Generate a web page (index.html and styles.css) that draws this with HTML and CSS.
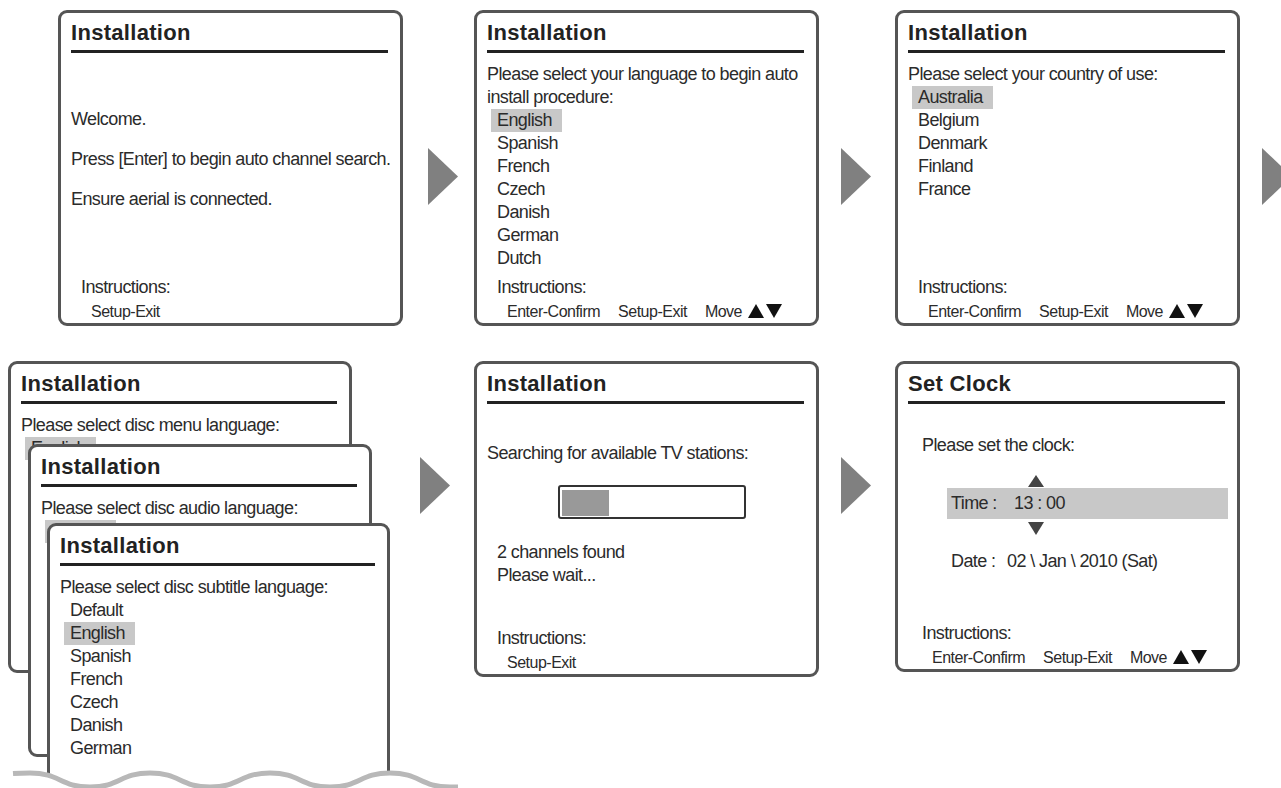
FILE: index.html
```html
<!DOCTYPE html>
<html lang="en">
<head>
    <meta charset="UTF-8">
    <meta name="viewport" content="width=device-width, initial-scale=1.0">
    <title>First Time Installation</title>
    <link rel="stylesheet" href="styles.css">
</head>

<body>
    <div class="row row-top">
        <div class="panel">
            <div class="panel-title">Installation</div>
            <div class="panel-body welcome">
                <p>Welcome.</p>
                <p>Press [Enter] to begin auto channel search.</p>
                <p>Ensure aerial is connected.</p>
            </div>
            <div class="instructions">
                <div class="instructions-label">Instructions:</div>
                <div class="keys"><span>Setup-Exit</span></div>
            </div>
        </div>

        <div class="arrow first"></div>

        <div class="panel">
            <div class="panel-title">Installation</div>
            <div class="panel-body list">
                <div class="prompt">Please select your language to begin auto<br>install procedure:</div>
                <div class="item selected"><span>English</span></div>
                <div class="item">Spanish</div>
                <div class="item">French</div>
                <div class="item">Czech</div>
                <div class="item">Danish</div>
                <div class="item">German</div>
                <div class="item">Dutch</div>
            </div>
            <div class="instructions">
                <div class="instructions-label">Instructions:</div>
                <div class="keys">
                    <span>Enter-Confirm</span>
                    <span>Setup-Exit</span>
                    <span>Move<svg class="updown" width="34" height="14" viewBox="0 0 34 14"><polygon points="0,14 8,0 16,14"/><polygon points="18,0 34,0 26,14"/></svg></span>
                </div>
            </div>
        </div>

        <div class="arrow"></div>

        <div class="panel">
            <div class="panel-title">Installation</div>
            <div class="panel-body list">
                <div class="prompt">Please select your country of use:</div>
                <div class="item selected"><span>Australia</span></div>
                <div class="item">Belgium</div>
                <div class="item">Denmark</div>
                <div class="item">Finland</div>
                <div class="item">France</div>
            </div>
            <div class="instructions">
                <div class="instructions-label">Instructions:</div>
                <div class="keys">
                    <span>Enter-Confirm</span>
                    <span>Setup-Exit</span>
                    <span>Move<svg class="updown" width="34" height="14" viewBox="0 0 34 14"><polygon points="0,14 8,0 16,14"/><polygon points="18,0 34,0 26,14"/></svg></span>
                </div>
            </div>
        </div>

        <div class="arrow"></div>
    </div>

    <div class="row row-bottom">
        <div class="stack">
            <div class="panel menu">
                <div class="panel-title">Installation</div>
                <div class="panel-body list">
                    <div class="prompt">Please select disc menu language:</div>
                    <div class="item selected"><span>English</span></div>
                </div>
            </div>
            <div class="panel audio">
                <div class="panel-title">Installation</div>
                <div class="panel-body list">
                    <div class="prompt">Please select disc audio language:</div>
                    <div class="item selected"><span>English</span></div>
                </div>
            </div>
            <div class="panel subtitle">
                <div class="panel-title">Installation</div>
                <div class="panel-body list">
                    <div class="prompt">Please select disc subtitle language:</div>
                    <div class="item">Default</div>
                    <div class="item selected"><span>English</span></div>
                    <div class="item">Spanish</div>
                    <div class="item">French</div>
                    <div class="item">Czech</div>
                    <div class="item">Danish</div>
                    <div class="item">German</div>
                </div>
            </div>
        </div>

        <div class="arrow"></div>

        <div class="panel">
            <div class="panel-title">Installation</div>
            <div class="panel-body search">
                <p>Searching for available TV stations:</p>
                <div class="progress"><div class="progress-fill" style="width: 47px"></div></div>
                <p class="found">2 channels found<br>Please wait...</p>
            </div>
            <div class="instructions">
                <div class="instructions-label">Instructions:</div>
                <div class="keys"><span>Setup-Exit</span></div>
            </div>
        </div>

        <div class="arrow"></div>

        <div class="panel clock-panel">
            <div class="panel-title">Set Clock</div>
            <div class="panel-body clock">
                <p class="clock-prompt">Please set the clock:</p>
                <div class="tri up"></div>
                <div class="clock-row selected"><span class="clock-label">Time :</span>13 : 00</div>
                <div class="tri down"></div>
                <div class="clock-row"><span class="clock-label short">Date :</span>02 \ Jan \ 2010 (Sat)</div>
            </div>
            <div class="instructions clock-instr">
                <div class="instructions-label">Instructions:</div>
                <div class="keys">
                    <span>Enter-Confirm</span>
                    <span>Setup-Exit</span>
                    <span>Move<svg class="updown" width="34" height="14" viewBox="0 0 34 14"><polygon points="0,14 8,0 16,14"/><polygon points="18,0 34,0 26,14"/></svg></span>
                </div>
            </div>
        </div>

        <!-- torn edge under the stacked disc menus -->
        <svg class="wave" width="470" height="25" viewBox="0 0 470 25">
            <path class="wave-fill" d="M13,8.5 C20,8 25,8 30,8 C60,8 60,22 90,22 C120,22 120,8 150,8 C180,8 180,22 210,22 C240,22 240,8 270,8 C300,8 300,22 330,22 C360,22 360,8 390,8 C420,8 420,22 450,22 L470,22 L470,25 L13,25 Z"/>
            <path class="wave-line" d="M13,8.5 C20,8 25,8 30,8 C60,8 60,22 90,22 C120,22 120,8 150,8 C180,8 180,22 210,22 C240,22 240,8 270,8 C300,8 300,22 330,22 C360,22 360,8 390,8 C420,8 420,22 450,22 L458,22"/>
        </svg>
    </div>
</body>
</html>
```

FILE: styles.css
```css
html, body {
    margin: 0;
    overflow: hidden;
}

body {
    background-color: #fff;
    color: #2b2b2b;
    font-family: "Liberation Sans", Arial, sans-serif;
    font-size: 18px;
    line-height: 23px;
    letter-spacing: -0.6px;
}

p {
    margin: 0;
}

.row {
    display: flex;
    align-items: flex-start;
}

.row-top {
    margin-top: 10px;
    padding-left: 58px;
}

.row-bottom {
    position: relative;
    margin-top: 35px;
    padding-left: 8px;
    height: 427px;
}

/* screen frame */
.panel {
    box-sizing: border-box;
    flex-shrink: 0;
    display: flex;
    flex-direction: column;
    width: 345px;
    height: 316px;
    padding: 7px 12px 0 10px;
    border: 3px solid #555;
    border-radius: 9px;
    background-color: #fff;
    white-space: nowrap;
}

.panel-title {
    font-weight: bold;
    font-size: 22px;
    line-height: 26px;
    letter-spacing: 0.3px;
    color: #222;
    padding-bottom: 4px;
    border-bottom: 3px solid #222;
}

.instructions {
    margin-top: auto;
    padding-left: 10px;
}

.instructions-label {
    margin-bottom: 2px;
}

.keys {
    display: flex;
    gap: 18px;
    padding-left: 10px;
    font-size: 16px;
    line-height: 22px;
    letter-spacing: -0.5px;
}

.updown {
    margin-left: 6px;
    vertical-align: -1px;
    fill: #111;
}

/* page arrows */
.arrow {
    flex-shrink: 0;
    width: 30px;
    height: 57px;
    margin: 0 24px 0 22px;
    background-color: #808080;
    clip-path: polygon(0 0, 100% 50%, 0 100%);
}

.arrow.first {
    margin-left: 25px;
    margin-right: 16px;
}

.row-top .arrow {
    margin-top: 138px;
}

.row-bottom .arrow {
    margin-top: 96px;
}

/* welcome screen */
.welcome {
    padding-top: 55px;
}

.welcome p {
    margin-bottom: 17px;
}

/* selection lists */
.list {
    padding-top: 10px;
}

.item {
    padding-left: 10px;
}

.item.selected span {
    margin-left: -6px;
    padding: 1px 10px 2px 6px;
    background-color: #c8c8c8;
}

/* stacked disc language screens */
.stack {
    position: relative;
    flex-shrink: 0;
    width: 390px;
    height: 427px;
    overflow: hidden;
}

.stack .panel {
    position: absolute;
    width: 344px;
}

.panel.menu {
    left: 0;
    top: 0;
    height: 312px;
}

.panel.audio {
    left: 20px;
    top: 83px;
    height: 313px;
}

.panel.subtitle {
    left: 39px;
    top: 162px;
    width: 343px;
    height: 320px;
}

.wave {
    position: absolute;
    left: 0;
    top: 404px;
}

.wave-fill {
    fill: #fff;
}

.wave-line {
    fill: none;
    stroke: #b8b8b8;
    stroke-width: 5;
}

/* channel search */
.search {
    padding-top: 38px;
}

.progress {
    box-sizing: border-box;
    width: 188px;
    height: 34px;
    margin: 20px 0 0 71px;
    padding: 3px 2px 1px;
    border: 2px solid #333;
    border-radius: 3px;
}

.progress-fill {
    height: 26px;
    background-color: #999;
}

.found {
    margin-top: 22px;
    padding-left: 10px;
}

/* clock */
.clock-panel {
    height: 311px;
}

.clock {
    padding-top: 30px;
}

.clock-prompt {
    padding-left: 14px;
}

.tri {
    width: 16px;
    height: 12px;
    margin: 18px 0 1px 120px;
    background-color: #444;
    clip-path: polygon(50% 0, 100% 100%, 0 100%);
}

.tri.down {
    height: 13px;
    margin: 3px 0 0 120px;
    clip-path: polygon(0 0, 100% 0, 50% 100%);
}

.clock-row {
    margin: 15px -3px 0 39px;
    padding-left: 4px;
}

.clock-row.selected {
    margin-top: 0;
    line-height: 31px;
    background-color: #c8c8c8;
}

.clock-label {
    display: inline-block;
    width: 63px;
}

.clock-label.short {
    width: 56px;
}

.clock-instr {
    padding-left: 14px;
}
```
